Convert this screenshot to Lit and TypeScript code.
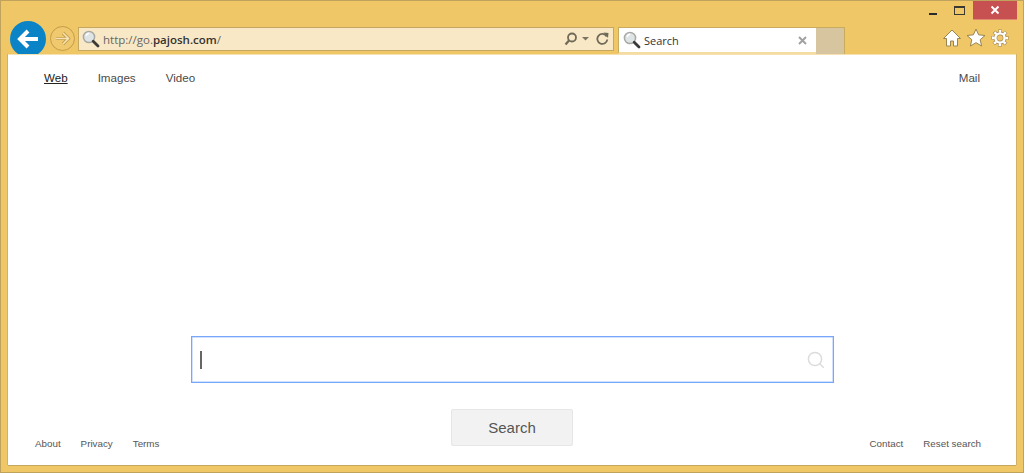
import { LitElement, html, css, svg } from "lit";
import { customElement } from "lit/decorators.js";

const mag = svg`<svg class="mag" width="18" height="18" viewBox="0 0 18 18">
  <circle cx="7" cy="7" r="5.6" fill="#dfe4e6" stroke="#a9a9a4" stroke-width="1.5"/>
  <path d="M4.2 6a3.2 3.2 0 0 1 3-2.7" fill="none" stroke="#fff" stroke-width="1.5"/>
  <path d="M11.2 11.2l4.8 4.8" stroke="#3a3a38" stroke-width="2.8" stroke-linecap="round"/>
</svg>`;

@customElement("app-root")
export class AppRoot extends LitElement {
  static styles = css`
    :host {
      display: flex;
      flex-direction: column;
      box-sizing: border-box;
      width: 1024px;
      height: 473px;
      background: #f0c766;
      border: 1px solid #bfa35c;
      padding: 0 7px 7px;
      font-family: "Liberation Sans", Arial, sans-serif;
      overflow: hidden;
    }
    .caption { display: flex; justify-content: flex-end; height: 19px; margin-right: -1px; flex: none; }
    .caption > div { display: flex; align-items: center; justify-content: center; }
    .min { width: 8px; margin-right: 17px; padding-top: 6px; box-sizing: border-box; }
    .min i { display: block; width: 8px; height: 2px; background: #2b2b2b; flex: none; }
    .max { width: 11px; margin-right: 8px; }
    .max i { display: block; width: 11px; height: 9px; box-sizing: border-box; border: 1px solid #3a3a30; border-top-width: 2px; }
    .close { width: 44px; background: #c75050; border-bottom: 1px solid #e08a70; box-sizing: border-box; }
    .toolbar { display: flex; height: 34px; flex: none; align-items: flex-start; position: relative; }
    .back {
      width: 36px; height: 36px; border-radius: 50%; background: #0a84c6; flex: none;
      margin: 1px 4px 0 2px; display: flex; align-items: center; justify-content: center;
    }
    .fwd {
      width: 25px; height: 25px; box-sizing: border-box; border-radius: 50%; flex: none; margin: 6px 3px 0 0;
      border: 1px solid #c49c48; background: #f0c96e; display: flex; align-items: center; justify-content: center;
    }
    .addr {
      width: 536px; height: 24px; box-sizing: border-box; margin-top: 7px; flex: none;
      border: 1px solid #c5a75f; background: #f9e8c5; display: flex; align-items: center; padding: 0 4px 0 3px;
    }
    .url { font-family: "Open Sans", sans-serif; font-size: 11.5px; line-height: 16px; padding-top: 1px; color: #666; margin-left: 3px; flex: 1; }
    .url b { color: #333; font-weight: 600; }
    .tools { display: flex; align-items: center; gap: 6px; }
    .tab {
      width: 198px; height: 27px; margin: 7px 0 0 4px; box-sizing: border-box; flex: none; background: #fff;
      border: 1px solid #c9ab5f; border-bottom: 2px solid #f6dc9f; border-right: none;
      display: flex; align-items: center; padding: 0 9px 0 4px;
    }
    .tab span { font-family: "Open Sans", sans-serif; font-size: 11px; line-height: 16px; padding-top: 1px; color: #333; margin-left: 3px; flex: 1; }
    .newtab { width: 29px; height: 27px; margin-top: 7px; box-sizing: border-box; background: #d6c59f; border: 1px solid #c9ab5f; border-left: none; flex: none; border-bottom: none; }
    .right { margin-left: auto; display: flex; gap: 4px; margin-top: 8px; margin-right: -7px; padding-right: 13px; }
    main {
      flex: 1; background: #fff; display: flex; flex-direction: column; position: relative; z-index: 1;
      border-top: 1px solid #f6e2b0; box-shadow: -1px 0 0 #d3b268, 1px 0 0 #d3b268, 0 1px 0 #c5a75f;
    }
    nav { display: flex; padding: 16px 36px 0; font-size: 11.6px; color: #4a4a4a; line-height: 14px; gap: 30px; }
    nav a.on { color: #222; text-decoration: underline; }
    nav .mail { margin-left: auto; }
    .box {
      width: 643px; height: 47px; box-sizing: border-box; margin: 251px 0 0 183px;
      border: 1px solid #76a7fb; box-shadow: inset 0 0 0 0.5px #a6c6fd; display: flex; align-items: center; padding: 0 8px;
    }
    .cursor { width: 2px; height: 18px; background: #666; }
    .box svg { margin-left: auto; }
    .bottom { display: grid; grid-template-columns: 1fr 122px 1fr; margin-top: 26px; align-items: end; }
    .links { display: flex; gap: 20px; font-size: 9.8px; line-height: 12px; color: #555; padding-left: 27px; }
    .links.r { justify-content: flex-end; padding: 0 35px 0 0; }
    button {
      height: 37px; width: 122px; box-sizing: border-box; background: #f2f2f2; border: 1px solid #e6e6e6; border-radius: 2px;
      font: 15px "Liberation Sans", Arial, sans-serif; color: #555; padding: 0; margin-bottom: 4px;
    }
  `;

  render() {
    return html`
      <div class="caption">
        <div class="min"><i></i></div>
        <div class="max"><i></i></div>
        <div class="close">
          <svg width="10" height="10" viewBox="0 0 10 10"><path d="M1.5 1.5l7 7M8.5 1.5l-7 7" stroke="#fff" stroke-width="2"/></svg>
        </div>
      </div>
      <div class="toolbar">
        <div class="back">
          <svg width="24" height="22" viewBox="0 0 24 22"><path d="M12 3L4 11l8 8M4.5 11H22" fill="none" stroke="#fff" stroke-width="4"/></svg>
        </div>
        <div class="fwd">
          <svg width="17" height="15" viewBox="0 0 17 15">
            <path d="M9 2l5.5 5.5L9 13M14 7.5H2" fill="none" stroke="#c49c48" stroke-width="3.2"/>
            <path d="M9 2l5.5 5.5L9 13M14 7.5H2" fill="none" stroke="#f6e4b4" stroke-width="1.6"/>
          </svg>
        </div>
        <div class="addr">
          ${mag}
          <div class="url">http://go.<b>pajosh.com</b>/</div>
          <div class="tools">
            <svg width="26" height="14" viewBox="0 0 26 14">
              <circle cx="8" cy="5.5" r="4" fill="none" stroke="#6f6a58" stroke-width="1.8"/>
              <path d="M5 8.5L1.5 12.5" stroke="#6f6a58" stroke-width="2.2"/>
              <path d="M18 5h7l-3.5 3.5z" fill="#7a7460"/>
            </svg>
            <svg width="13" height="14" viewBox="0 0 13 14">
              <path d="M10.7 4.5a5 5 0 1 0 .6 3" fill="none" stroke="#6f6a58" stroke-width="1.8"/>
              <path d="M7.5 0.5l5 .5-.5 5z" fill="#6f6a58"/>
            </svg>
          </div>
        </div>
        <div class="tab">
          ${mag}
          <span>Search</span>
          <svg width="9" height="9" viewBox="0 0 9 9"><path d="M1 1l7 7M8 1l-7 7" stroke="#a0a0a0" stroke-width="1.9"/></svg>
        </div>
        <div class="newtab"></div>
        <div class="right">
          <svg width="20" height="20" viewBox="0 0 20 20"><path d="M10 2L1.5 10.5H4.5V18h4v-5h3v5h4v-7.5h3z" fill="#fff" stroke="#9a8450" stroke-width="1"/></svg>
          <svg width="20" height="20" viewBox="0 0 20 20"><path d="M10 1l2.6 5.8 6.4.7-4.8 4.2 1.400 6.300-5.600-3.300L4.400 18l1.400-6.300L1 7.500l6.400-.7z" fill="#fff" stroke="#9a8450" stroke-width="1"/></svg>
          <svg width="20" height="20" viewBox="0 0 20 20" fill="none">
            <circle cx="10" cy="10" r="6.700" stroke="#9a8450" stroke-width="3.800" stroke-dasharray="3.260 2" stroke-dashoffset="1.630" transform="rotate(-90 10 10)"/>
            <circle cx="10" cy="10" r="4.600" stroke="#9a8450" stroke-width="3.600"/>
            <circle cx="10" cy="10" r="6.700" stroke="#fff" stroke-width="2.800" stroke-dasharray="2.400 2.860" stroke-dashoffset="1.200" transform="rotate(-90 10 10)"/>
            <circle cx="10" cy="10" r="4.600" stroke="#fff" stroke-width="2.400"/>
          </svg>
        </div>
      </div>
      <main>
        <nav>
          <a class="on">Web</a><a>Images</a><a>Video</a><a class="mail">Mail</a>
        </nav>
        <div class="box">
          <div class="cursor"></div>
          <svg width="18" height="18" viewBox="0 0 18 18"><circle cx="8" cy="8" r="6.6" fill="none" stroke="#dcdcdc" stroke-width="1.5"/><path d="M12.8 12.8l4 4" stroke="#dcdcdc" stroke-width="1.5"/></svg>
        </div>
        <div class="bottom">
          <div class="links"><a>About</a><a>Privacy</a><a>Terms</a></div>
          <button>Search</button>
          <div class="links r"><a>Contact</a><a>Reset search</a></div>
        </div>
      </main>
    `;
  }
}
